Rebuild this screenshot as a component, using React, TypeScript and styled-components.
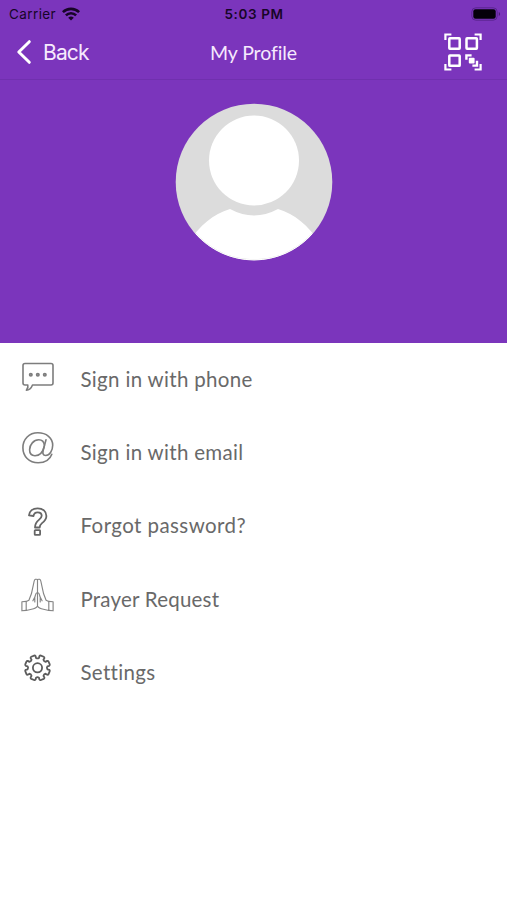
import React from 'react';
import styled, { createGlobalStyle } from 'styled-components';

const GlobalStyle = createGlobalStyle`
  * { box-sizing: border-box; }
  body { margin: 0; background: #fff; }
`;

const Screen = styled.div`
  width: 507px;
  height: 900px;
  display: flex;
  flex-direction: column;
  overflow: hidden;
  background: #fff;
  font-family: Lato, 'Open Sans', sans-serif;
`;

const Header = styled.header`
  height: 343px;
  flex: none;
  background: #7b35bc;
`;

const StatusBar = styled.div`
  height: 27px;
  display: grid;
  grid-template-columns: 1fr auto 1fr;
  align-items: center;
  padding: 1px 8px 0 9px;
  font-family: Inter, Roboto, sans-serif;
  font-size: 13.5px;
  color: #170528;
`;

const Carrier = styled.div`
  display: flex;
  align-items: center;
  gap: 6px;
  letter-spacing: 0.4px;
`;

const Clock = styled.div`
  font-weight: 600;
  letter-spacing: 0.6px;
`;

const BatteryArea = styled.div`
  display: flex;
  justify-content: flex-end;
  margin-right: -2px;
`;

const NavBar = styled.nav`
  height: 53px;
  display: grid;
  grid-template-columns: 1fr auto 1fr;
  align-items: center;
  padding: 0 25px 2px 16px;
  border-bottom: 1px solid #7030ae;
  color: #f6eafd;
`;

const BackButton = styled.button`
  display: flex;
  align-items: center;
  gap: 11px;
  padding: 0;
  border: 0;
  background: none;
  color: inherit;
  font: 400 21px Inter, sans-serif;
  letter-spacing: -0.85px;
`;

const Title = styled.h1`
  margin: 1px 0 0 9px;
  font-size: 19.5px;
  line-height: 24px;
  font-weight: 400;
  letter-spacing: -0.1px;
`;

const ScanButton = styled.button`
  justify-self: end;
  display: flex;
  padding: 0;
  border: 0;
  background: none;
`;

const AvatarArea = styled.div`
  display: flex;
  justify-content: center;
  padding-top: 22.6px;
`;

const Menu = styled.ul`
  list-style: none;
  margin: 0;
  padding: 0;
`;

const MenuRow = styled.li`
  height: 73.3px;
  display: flex;
  align-items: flex-start;
  padding: 16px 0 0 20px;
  gap: 24.5px;
`;

const Label = styled.span<{ $spacing: number }>`
  padding-top: 6.8px;
  font-size: 20.5px;
  line-height: 26px;
  color: #696969;
  white-space: nowrap;
  letter-spacing: ${(p) => p.$spacing}px;
`;

const LineIcon = styled.svg`
  width: 36px;
  height: 36px;
  flex: none;
  overflow: visible;
  fill: none;
  stroke: #7d7d7d;
  stroke-width: 1.6;
  stroke-linejoin: round;
  stroke-linecap: round;
`;

const WifiIcon = () => (
  <svg width="18" height="14" viewBox="0 0 18 14" fill="none" stroke="#170528" strokeWidth="2.6">
    <path d="M.9 5.2a11.5 11.5 0 0 1 16.2 0" />
    <path d="M3.9 8.4a7.2 7.2 0 0 1 10.2 0" />
    <path d="M9 13.6 6.2 10.8a4 4 0 0 1 5.6 0Z" fill="#170528" stroke="none" />
  </svg>
);

const BatteryIcon = () => (
  <svg width="30" height="14" viewBox="0 0 30 14">
    <rect x=".8" y=".8" width="25.4" height="12.4" rx="4" fill="none" stroke="#5a2590" />
    <rect x="2.3" y="2.3" width="22.4" height="9.4" rx="2.2" fill="#05000a" />
    <path d="M27.8 5v4c1.7-.7 1.7-3.3 0-4Z" fill="#4a1c78" />
  </svg>
);

const ChevronIcon = () => (
  <svg width="16" height="26" viewBox="0 0 16 26" fill="none" stroke="#fff" strokeWidth="3" strokeLinecap="round" strokeLinejoin="round">
    <path d="M13.3 2.7 2.8 13l10.5 10.3" />
  </svg>
);

const ScanIcon = () => (
  <svg width="38" height="38" viewBox="0 0 38 38" fill="none" stroke="#fff" strokeWidth="2.2">
    <path d="M1.4 7V1.5H7.4M30.6 1.5h6V7M1.4 31v5.5H7.4M30.6 36.5h6V31" />
    <rect x="5.3" y="5.3" width="10.4" height="10.4" rx=".6" strokeWidth="2.5" />
    <rect x="22.5" y="5.3" width="10.4" height="10.4" rx=".6" strokeWidth="2.5" />
    <rect x="5.3" y="22.4" width="10.4" height="10.4" rx=".6" strokeWidth="2.5" />
    <path d="M22.4 26.8v-4.4h5.2M28.4 32.6h4.6v-4.8" strokeWidth="2.4" />
    <rect x="24.8" y="24.8" width="5.8" height="5.8" rx="1" fill="#fff" stroke="none" />
  </svg>
);

const Avatar = () => (
  <svg width="158" height="158" viewBox="0 0 158 158">
    <defs>
      <clipPath id="avatarClip"><circle cx="79" cy="79" r="77.3" /></clipPath>
    </defs>
    <circle cx="79" cy="79" r="78.3" fill="#dcdcdc" />
    <g clipPath="url(#avatarClip)">
      <path d="M14 138C25 123 38 111 55 106Q79 119 103 106C120 111 133 123 144 138V160H14Z" fill="#fff" />
    </g>
    <path d="M20.5 130.5A78 78 0 0 0 137.5 130.5" fill="none" stroke="#fff" strokeWidth="1" />
    <circle cx="79" cy="57.5" r="45" fill="#fff" />
  </svg>
);

const ChatIcon = () => (
  <LineIcon viewBox="0 0 36 36">
    <path d="M5 4.5H31Q33 4.5 33 6.5V24Q33 26 31 26H12.5Q10.5 31.2 6.4 31.2Q8.5 28.5 7.8 26H5Q3 26 3 24V6.5Q3 4.5 5 4.5Z" />
    <circle cx="10.8" cy="15.7" r="1.25" fill="#aaa" />
    <circle cx="17.8" cy="15.7" r="1.25" fill="#aaa" />
    <circle cx="24.8" cy="15.7" r="1.25" fill="#aaa" />
  </LineIcon>
);

const AtIcon = () => (
  <LineIcon viewBox="0 0 36 36">
    <path d="M31.8 22.3C29.8 28 24.5 30.8 18.2 30.8C9.1 30.8 2.9 24.4 2.9 15.8C2.9 7.1 9.3.8 17.8.8C26.5.8 32.7 6 32.7 13.2C32.7 19 29.4 23.5 25.7 23.5C22.8 23.5 22.5 21.2 23.2 18.4L26 7.7" />
    <path d="M24.4 13.4C24 9.8 22 7.8 18.8 7.8C13.7 7.8 9.6 12.6 9.6 17.8C9.6 21.4 11.6 23.7 15 23.7C19.4 23.7 22.8 20.4 24.2 14.5" />
  </LineIcon>
);

const QuestionIcon = () => (
  <LineIcon viewBox="0 0 36 36">
    <g stroke="#666" strokeWidth="1.8">
      <path d="M9 9.4C9.4 5 12.8 2.3 17.6 2.3C22.8 2.3 26.4 5.4 26.4 9.9C26.4 13.5 24.3 15.3 22 17.1C20.4 18.4 19.7 19.3 19.7 21.5H15C15 18 16.3 16 18.9 13.9C20.8 12.4 21.7 11.5 21.7 9.8C21.7 7.7 20 6.4 17.6 6.4C15.2 6.4 13.9 7.7 13.5 10Z" />
      <rect x="14.7" y="24.2" width="5.4" height="4.6" rx=".6" />
    </g>
  </LineIcon>
);

const PrayerIcon = () => (
  <LineIcon viewBox="0 0 36 36">
    <g stroke="#858585" strokeWidth="1.15">
      <path d="M17.5 27V.6M17.5.6C16-.2 14.6.2 14.2 2L11.4 14.8 8.9 21.2 6.2 22.6V31.5L11.5 30.3C14.7 29.7 16.6 28.8 17.5 27C18.4 28.8 20.3 29.7 23.5 30.3L28.8 31.5V22.6L26.1 21.2 23.6 14.8 20.8 2C20.4.2 19-.2 17.5.6" />
      <path d="M6.2 22.4 1.9 22.8V31.8L6.2 31.4M28.8 22.4 33.1 22.8V31.8L28.8 31.4" />
      <path d="M17.5 13.5C15.3 13.8 15.5 16 15 17.8L12.9 21.8M17.5 13.5C19.7 13.8 19.5 16 20 17.8L22.1 21.8M14.8 18.5V23M20.2 18.5V23" />
    </g>
  </LineIcon>
);

const gearPath = (() => {
  const teeth = 8;
  const points: string[] = [];
  for (let i = 0; i < teeth; i++) {
    const base = ((i + 0.5) * 360) / teeth - 90;
    const at = (r: number, a: number) => {
      const t = ((base + a) * Math.PI) / 180;
      return `${(17.5 + r * Math.cos(t)).toFixed(2)} ${(15.8 + r * Math.sin(t)).toFixed(2)}`;
    };
    points.push(
      `${i === 0 ? 'M' : 'L'}${at(10, -14)}L${at(11.9, -13)}Q${at(12.8, -11)} ${at(12.7, -7)}L${at(12.7, 7)}Q${at(12.8, 11)} ${at(11.9, 13)}L${at(10, 14)}Q${at(8.9, 22.5)} ${at(10, 31)}`,
    );
  }
  return points.join('') + 'Z';
})();

const GearIcon = () => (
  <LineIcon viewBox="0 0 36 36">
    <g stroke="#5c5c5c" strokeWidth="1.8">
      <path d={gearPath} />
      <circle cx="17.5" cy="15.8" r="4.6" />
    </g>
  </LineIcon>
);

const items = [
  { label: 'Sign in with phone', spacing: 0.32, Icon: ChatIcon },
  { label: 'Sign in with email', spacing: 0.32, Icon: AtIcon },
  { label: 'Forgot password?', spacing: 0.42, Icon: QuestionIcon },
  { label: 'Prayer Request', spacing: 0.22, Icon: PrayerIcon },
  { label: 'Settings', spacing: 0.3, Icon: GearIcon },
];

export default function App() {
  return (
    <>
      <GlobalStyle />
      <Screen>
        <Header>
          <StatusBar>
            <Carrier>Carrier<WifiIcon /></Carrier>
            <Clock>5:03 PM</Clock>
            <BatteryArea><BatteryIcon /></BatteryArea>
          </StatusBar>
          <NavBar>
            <BackButton><ChevronIcon />Back</BackButton>
            <Title>My Profile</Title>
            <ScanButton aria-label="Scan code"><ScanIcon /></ScanButton>
          </NavBar>
          <AvatarArea><Avatar /></AvatarArea>
        </Header>
        <Menu>
          {items.map(({ label, spacing, Icon }) => (
            <MenuRow key={label}>
              <Icon />
              <Label $spacing={spacing}>{label}</Label>
            </MenuRow>
          ))}
        </Menu>
      </Screen>
    </>
  );
}
